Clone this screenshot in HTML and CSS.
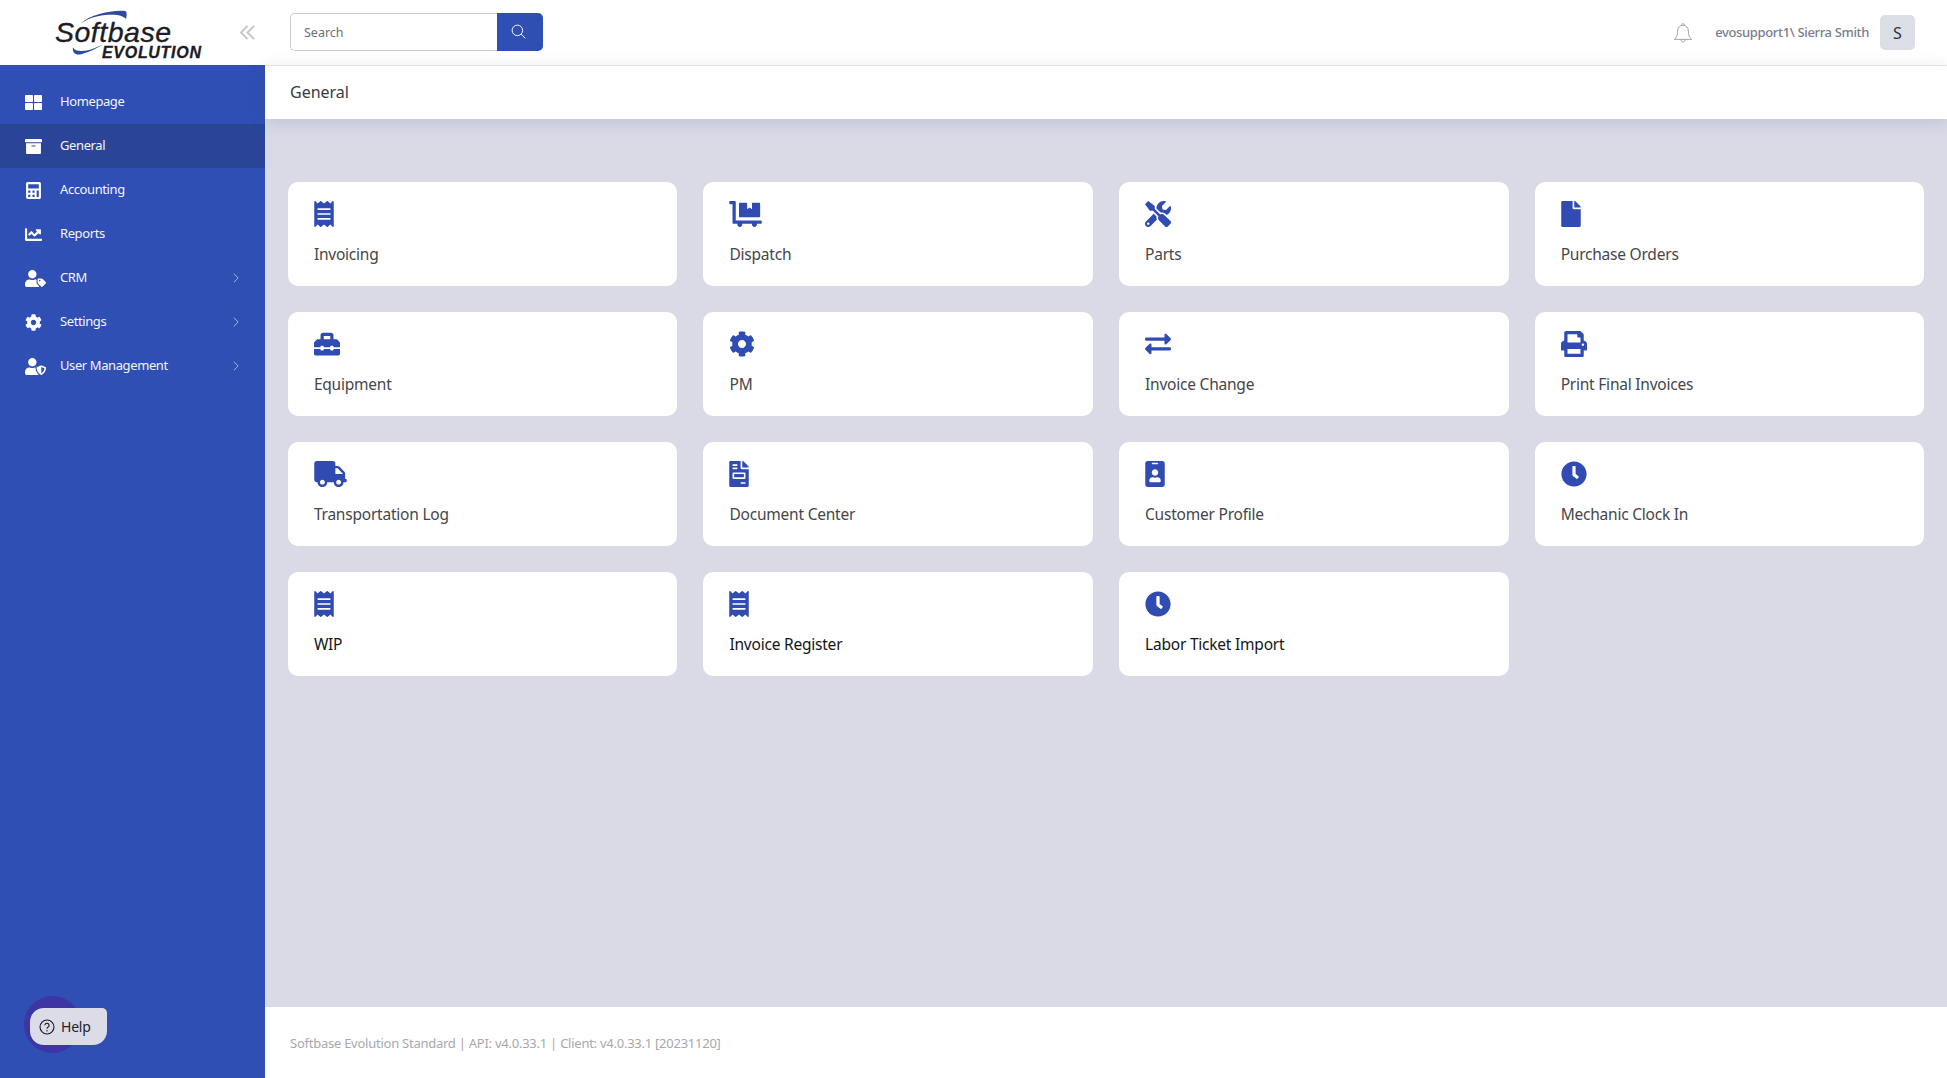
FILE: index.html
```html
<!DOCTYPE html>
<html lang="en">
<head>
<meta charset="utf-8">
<title>General</title>
<link rel="stylesheet" href="styles.css">
</head>
<body>
<svg class="defs" aria-hidden="true">
  <symbol id="i-receipt" viewBox="0 0 384 512"><path d="M358.4 3.2L320 48 265.6 3.2a15.9 15.9 0 0 0-19.2 0L192 48 137.6 3.2a15.9 15.9 0 0 0-19.2 0L64 48 25.6 3.2C15-4.7 0 2.8 0 16v480c0 13.2 15 20.7 25.6 12.8L64 464l54.4 44.8a15.9 15.9 0 0 0 19.2 0L192 464l54.4 44.8a15.9 15.9 0 0 0 19.2 0L320 464l38.4 44.8c10.5 7.9 25.6.4 25.6-12.8V16c0-13.2-15-20.7-25.6-12.8zM320 360c0 4.4-3.6 8-8 8H72c-4.4 0-8-3.6-8-8v-16c0-4.4 3.6-8 8-8h240c4.4 0 8 3.6 8 8v16zm0-96c0 4.4-3.6 8-8 8H72c-4.4 0-8-3.6-8-8v-16c0-4.4 3.6-8 8-8h240c4.4 0 8 3.6 8 8v16zm0-96c0 4.4-3.6 8-8 8H72c-4.4 0-8-3.6-8-8v-16c0-4.4 3.6-8 8-8h240c4.4 0 8 3.6 8 8v16z"/></symbol>
  <symbol id="i-dolly" viewBox="0 0 640 512"><path d="M208 320h384c8.8 0 16-7.2 16-16V48c0-8.8-7.2-16-16-16H448v128l-48-32-48 32V32H208c-8.8 0-16 7.2-16 16v256c0 8.8 7.2 16 16 16zm416 64H128V16c0-8.8-7.2-16-16-16H16C7.2 0 0 7.2 0 16v32c0 8.8 7.2 16 16 16h48v368c0 8.8 7.2 16 16 16h82.9c-1.8 5-2.9 10.4-2.9 16 0 26.5 21.5 48 48 48s48-21.5 48-48c0-5.6-1.2-11-2.9-16H451c-1.8 5-2.9 10.4-2.9 16 0 26.5 21.5 48 48 48s48-21.5 48-48c0-5.6-1.2-11-2.9-16H624c8.8 0 16-7.2 16-16v-32c0-8.8-7.2-16-16-16z"/></symbol>
  <symbol id="i-tools" viewBox="0 0 512 512"><path d="M501.1 395.7L384 278.6c-23.1-23.1-57.6-27.6-85.4-13.9L192 158.1V96L64 0 0 64l96 128h62.1l106.6 106.6c-13.6 27.8-9.2 62.3 13.9 85.4l117.1 117.1c14.6 14.6 38.2 14.6 52.7 0l52.7-52.7c14.5-14.6 14.5-38.2 0-52.7zM331.7 225c28.3 0 54.9 11 74.9 31l19.4 19.4c15.8-6.9 30.8-16.5 43.8-29.5 37.1-37.1 49.7-89.3 37.9-136.7-2.2-9-13.5-12.1-20.1-5.5l-74.4 74.4-67.9-11.3L334 98.9l74.4-74.4c6.6-6.6 3.4-17.9-5.7-20.2-47.4-11.7-99.6.9-136.6 37.9-28.5 28.5-41.9 66.1-41.2 103.6l82.1 82.1c8.1-1.9 16.5-2.9 24.7-2.9zm-103.9 82l-56.7-56.7L18.7 402.8c-25 25-25 65.5 0 90.5s65.5 25 90.5 0l123.6-123.6c-7.6-19.9-9.9-41.6-5-62.7zM64 472c-13.2 0-24-10.8-24-24 0-13.3 10.7-24 24-24s24 10.7 24 24c0 13.2-10.7 24-24 24z"/></symbol>
  <symbol id="i-file" viewBox="0 0 384 512"><path d="M224 136V0H24C10.7 0 0 10.7 0 24v464c0 13.3 10.7 24 24 24h336c13.3 0 24-10.7 24-24V160H248c-13.2 0-24-10.8-24-24zm160-14.1v6.1H256V0h6.1c6.4 0 12.5 2.5 17 7l97.9 98c4.5 4.5 7 10.6 7 16.9z"/></symbol>
  <symbol id="i-toolbox" viewBox="0 0 512 512"><path d="M502.63 214.63l-45.25-45.25c-6-6-14.14-9.37-22.63-9.37H384V80c0-26.51-21.49-48-48-48H176c-26.51 0-48 21.49-48 48v80H77.25c-8.49 0-16.62 3.37-22.63 9.37L9.37 214.63c-6 6-9.37 14.14-9.37 22.63V320h128v-16c0-8.84 7.16-16 16-16h32c8.84 0 16 7.16 16 16v16h128v-16c0-8.84 7.16-16 16-16h32c8.84 0 16 7.16 16 16v16h128v-82.75c0-8.48-3.37-16.62-9.37-22.62zM320 160H192V96h128v64zm64 208c0 8.84-7.16 16-16 16h-32c-8.84 0-16-7.16-16-16v-16H192v16c0 8.84-7.16 16-16 16h-32c-8.84 0-16-7.16-16-16v-16H0v96c0 17.67 14.33 32 32 32h448c17.67 0 32-14.33 32-32v-96H384v16z"/></symbol>
  <symbol id="i-cog" viewBox="0 0 512 512"><path d="M487.4 315.7l-42.6-24.6c4.3-23.2 4.3-47 0-70.2l42.6-24.6c4.9-2.8 7.1-8.6 5.5-14-11.1-35.6-30-67.8-54.7-94.6-3.8-4.1-10-5.1-14.8-2.3L380.8 110c-17.9-15.4-38.5-27.3-60.8-35.1V25.8c0-5.6-3.9-10.5-9.4-11.7-36.7-8.2-74.3-7.8-109.2 0-5.5 1.2-9.4 6.1-9.4 11.7V75c-22.2 7.9-42.8 19.8-60.8 35.1L88.7 85.5c-4.9-2.8-11-1.9-14.8 2.3-24.7 26.7-43.6 58.9-54.7 94.6-1.7 5.4.6 11.2 5.5 14L67.3 221c-4.3 23.2-4.3 47 0 70.2l-42.6 24.6c-4.9 2.8-7.1 8.6-5.5 14 11.1 35.6 30 67.8 54.7 94.6 3.8 4.1 10 5.1 14.8 2.3l42.6-24.6c17.9 15.4 38.5 27.3 60.8 35.1v49.2c0 5.6 3.9 10.5 9.4 11.7 36.7 8.2 74.3 7.8 109.2 0 5.5-1.2 9.4-6.1 9.4-11.7v-49.2c22.2-7.9 42.8-19.8 60.8-35.1l42.6 24.6c4.9 2.8 11 1.9 14.8-2.3 24.7-26.7 43.6-58.9 54.7-94.6 1.5-5.5-.7-11.3-5.6-14.1zM256 336c-44.1 0-80-35.9-80-80s35.9-80 80-80 80 35.9 80 80-35.9 80-80 80z"/></symbol>
  <symbol id="i-exchange" viewBox="0 0 512 512"><path d="M0 168v-16c0-13.255 10.745-24 24-24h360V80c0-21.367 25.899-32.042 40.971-16.971l80 80c9.372 9.373 9.372 24.569 0 33.941l-80 80C409.956 271.982 384 261.456 384 240v-48H24c-13.255 0-24-10.745-24-24zm488 152H128v-48c0-21.314-25.862-32.08-40.971-16.971l-80 80c-9.372 9.373-9.372 24.569 0 33.941l80 80C102.057 463.997 128 453.437 128 432v-48h360c13.255 0 24-10.745 24-24v-16c0-13.255-10.745-24-24-24z"/></symbol>
  <symbol id="i-print" viewBox="0 0 512 512"><path d="M448 192V77.25c0-8.49-3.37-16.62-9.37-22.63L393.37 9.37c-6-6-14.14-9.37-22.63-9.37H96C78.33 0 64 14.33 64 32v160c-35.35 0-64 28.65-64 64v112c0 8.84 7.16 16 16 16h48v96c0 17.67 14.33 32 32 32h320c17.67 0 32-14.33 32-32v-96h48c8.84 0 16-7.16 16-16V256c0-35.35-28.65-64-64-64zm-64 256H128v-96h256v96zm0-224H128V64h192v48c0 8.84 7.16 16 16 16h48v96zm48 72c-13.25 0-24-10.75-24-24 0-13.26 10.75-24 24-24s24 10.74 24 24c0 13.25-10.75 24-24 24z"/></symbol>
  <symbol id="i-truck" viewBox="0 0 640 512"><path d="M624 352h-16V243.9c0-12.7-5.1-24.9-14.1-33.9L494 110.1c-9-9-21.2-14.1-33.9-14.1H416V48c0-26.5-21.5-48-48-48H48C21.5 0 0 21.5 0 48v320c0 26.5 21.5 48 48 48h16c0 53 43 96 96 96s96-43 96-96h128c0 53 43 96 96 96s96-43 96-96h48c8.8 0 16-7.2 16-16v-32c0-8.8-7.2-16-16-16zM160 464c-26.5 0-48-21.5-48-48s21.5-48 48-48 48 21.5 48 48-21.5 48-48 48zm320 0c-26.5 0-48-21.5-48-48s21.5-48 48-48 48 21.5 48 48-21.5 48-48 48zm80-208H416V144h44.1l99.9 99.9V256z"/></symbol>
  <symbol id="i-invoice" viewBox="0 0 384 512"><path d="M288 256H96v64h192v-64zm89-151L279.1 7c-4.5-4.5-10.6-7-17-7H256v128h128v-6.1c0-6.3-2.5-12.4-7-16.9zm-153 31V0H24C10.7 0 0 10.7 0 24v464c0 13.3 10.7 24 24 24h336c13.3 0 24-10.7 24-24V160H248c-13.2 0-24-10.8-24-24zM64 72c0-4.42 3.58-8 8-8h80c4.42 0 8 3.58 8 8v16c0 4.42-3.58 8-8 8H72c-4.42 0-8-3.58-8-8V72zm0 64c0-4.42 3.58-8 8-8h80c4.42 0 8 3.58 8 8v16c0 4.42-3.58 8-8 8H72c-4.42 0-8-3.58-8-8v-16zm256 304c0 4.42-3.58 8-8 8h-80c-4.42 0-8-3.58-8-8v-16c0-4.42 3.58-8 8-8h80c4.42 0 8 3.58 8 8v16zm0-200v96c0 8.84-7.16 16-16 16H80c-8.84 0-16-7.16-16-16v-96c0-8.84 7.16-16 16-16h224c8.84 0 16 7.16 16 16z"/></symbol>
  <symbol id="i-badge" viewBox="0 0 384 512"><path d="M336 0H48C21.5 0 0 21.5 0 48v416c0 26.5 21.5 48 48 48h288c26.5 0 48-21.5 48-48V48c0-26.5-21.5-48-48-48zM144 32h96c8.8 0 16 7.2 16 16s-7.2 16-16 16h-96c-8.8 0-16-7.2-16-16s7.2-16 16-16zm48 128c35.3 0 64 28.7 64 64s-28.7 64-64 64-64-28.7-64-64 28.7-64 64-64zm112 236.8c0 10.6-10 19.2-22.4 19.2H102.4C90 416 80 407.4 80 396.8v-19.2c0-31.8 30.1-57.6 67.2-57.6h5c12.3 5.1 25.7 8 39.8 8s27.6-2.9 39.8-8h5c37.1 0 67.2 25.8 67.2 57.6v19.2z"/></symbol>
  <symbol id="i-clock" viewBox="0 0 512 512"><path d="M256,8C119,8,8,119,8,256S119,504,256,504,504,393,504,256,393,8,256,8Zm92.49,313h0l-20,25a16,16,0,0,1-22.49,2.5h0l-67-49.72a40,40,0,0,1-15-31.23V112a16,16,0,0,1,16-16h32a16,16,0,0,1,16,16V256l58,42.5A16,16,0,0,1,348.49,321Z"/></symbol>
  <symbol id="i-grid" viewBox="0 0 512 512"><path d="M296 32h192c13.255 0 24 10.745 24 24v160c0 13.255-10.745 24-24 24H296c-13.255 0-24-10.745-24-24V56c0-13.255 10.745-24 24-24zm-80 0H24C10.745 32 0 42.745 0 56v160c0 13.255 10.745 24 24 24h192c13.255 0 24-10.745 24-24V56c0-13.255-10.745-24-24-24zM0 296v160c0 13.255 10.745 24 24 24h192c13.255 0 24-10.745 24-24V296c0-13.255-10.745-24-24-24H24c-13.255 0-24 10.745-24 24zm296 184h192c13.255 0 24-10.745 24-24V296c0-13.255-10.745-24-24-24H296c-13.255 0-24 10.745-24 24v160c0 13.255 10.745 24 24 24z"/></symbol>
  <symbol id="i-archive" viewBox="0 0 512 512"><path d="M32 448c0 17.7 14.3 32 32 32h384c17.7 0 32-14.3 32-32V160H32v288zm160-212c0-6.6 5.4-12 12-12h104c6.6 0 12 5.4 12 12v8c0 6.6-5.4 12-12 12H204c-6.6 0-12-5.4-12-12v-8zM480 32H32C14.3 32 0 46.3 0 64v48c0 8.8 7.2 16 16 16h480c8.8 0 16-7.2 16-16V64c0-17.7-14.3-32-32-32z"/></symbol>
  <symbol id="i-calc" viewBox="0 0 448 512"><path fill-rule="evenodd" d="M48 0h352c26 0 48 22 48 48v416c0 26-22 48-48 48H48c-26 0-48-22-48-48V48C0 22 22 0 48 0zm16 64v128h320V64H64zm0 192v64h64v-64H64zm128 0v64h64v-64h-64zm128 0v192h64V256h-64zM64 384v64h64v-64H64zm128 0v64h64v-64h-64z"/></symbol>
  <symbol id="i-chart" viewBox="0 0 512 512"><path d="M496 384H64V80c0-8.84-7.16-16-16-16H16C7.16 64 0 71.16 0 80v336c0 17.67 14.33 32 32 32h464c8.84 0 16-7.16 16-16v-32c0-8.84-7.16-16-16-16zM464 96H345.94c-21.38 0-32.09 25.85-16.97 40.97l32.4 32.4L288 242.75l-73.37-73.37c-12.5-12.5-32.76-12.5-45.25 0l-68.69 68.69c-6.25 6.25-6.25 16.38 0 22.63l22.62 22.62c6.25 6.25 16.38 6.25 22.63 0L192 237.25l73.37 73.37c12.5 12.5 32.76 12.5 45.25 0l96-96 32.4 32.4c15.12 15.12 40.97 4.41 40.97-16.97V112c0-8.84-7.16-16-16-16z"/></symbol>
  <symbol id="i-usertag" viewBox="0 0 640 512"><path d="M630.6 364.9l-90.3-90.2c-12-12-28.3-18.7-45.3-18.7h-79.3c-17.7 0-32 14.3-32 32v79.2c0 17 6.7 33.2 18.7 45.2l90.3 90.2c12.5 12.5 32.8 12.5 45.3 0l92.5-92.5c12.6-12.5 12.6-32.7.1-45.2zm-182.8-21c-13.3 0-24-10.7-24-24s10.7-24 24-24 24 10.7 24 24c0 13.2-10.7 24-24 24zm-223.8-88c70.7 0 128-57.3 128-128C352 57.3 294.7 0 224 0S96 57.3 96 128c0 70.6 57.3 127.9 128 127.9zm127.8 111.2V294c-12.2-3.6-24.9-6.2-38.2-6.2h-16.7c-22.2 10.2-46.9 16-72.9 16s-50.6-5.8-72.9-16h-16.7C60.2 288 0 348.2 0 422.4V464c0 26.5 21.5 48 48 48h352c15.5 0 29.1-7.5 37.9-18.9l-58-58c-18.1-18.1-28.1-42.2-28.1-67.9z"/></symbol>
  <symbol id="i-usershield" viewBox="0 0 640 512"><path d="M622.3 271.1l-115.2-45c-4.1-1.6-12.6-3.7-22.2 0l-115.2 45c-10.7 4.2-17.7 14-17.7 24.9 0 111.6 68.7 188.8 132.9 213.9 9.6 3.7 18 1.6 22.2 0C558.4 489.9 640 420.5 640 296c0-10.9-7-20.7-17.7-24.9zM496 462.4V273.3l95.5 37.3c-5.6 87.1-60.9 135.4-95.5 151.8zM224 256c70.7 0 128-57.3 128-128S294.7 0 224 0 96 57.3 96 128s57.3 128 128 128zm96 40c0-2.5.8-4.8 1.1-7.2-2.5-.1-4.9-.8-7.5-.8h-16.7c-22.2 10.2-46.9 16-72.9 16s-50.6-5.8-72.9-16h-16.7C60.2 288 0 348.2 0 422.4V464c0 26.5 21.5 48 48 48h352c6.8 0 13.3-1.5 19.2-4-54-42.9-99.2-116.7-99.2-212z"/></symbol>
  <symbol id="i-chev" viewBox="0 0 8 14"><path d="M1 1l6 6-6 6" fill="none" stroke="currentColor" stroke-width="1.2"/></symbol>
</svg>

<div class="app">
  <aside class="sidebar">
    <div class="brand">
      <svg class="logo" viewBox="0 0 150 54">
        <path class="swoosh" d="M25 19C35 10 55 5 70 6C72 6 72 10 71 14C68 10 60 9 50 10C40 11 32 14 25 19Z"/>
        <path class="swoosh" d="M18 42C17 48 21 51 27 49C34 47 41 44 47 40C40 43 33 46 27 46C22 46 19 45 18 42Z"/>
        <text class="logo-main" x="0" y="37">Softbase</text>
        <text class="logo-sub" x="47" y="53">EVOLUTION</text>
      </svg>
      <svg class="collapse" viewBox="0 0 18 16" width="17" height="15"><path d="M9 1L2 8l7 7M16 1L9 8l7 7" fill="none" stroke="#c3c5cf" stroke-width="2"/></svg>
    </div>
    <nav class="nav">
      <a class="nav-item"><span class="nav-ico"><svg class="ico-s"><use href="#i-grid"/></svg></span><span class="nav-label">Homepage</span></a>
      <a class="nav-item active"><span class="nav-ico"><svg class="ico-s"><use href="#i-archive"/></svg></span><span class="nav-label">General</span></a>
      <a class="nav-item"><span class="nav-ico"><svg class="ico-s"><use href="#i-calc"/></svg></span><span class="nav-label">Accounting</span></a>
      <a class="nav-item"><span class="nav-ico"><svg class="ico-s"><use href="#i-chart"/></svg></span><span class="nav-label">Reports</span></a>
      <a class="nav-item"><span class="nav-ico"><svg class="ico-w"><use href="#i-usertag"/></svg></span><span class="nav-label">CRM</span><svg class="chev"><use href="#i-chev"/></svg></a>
      <a class="nav-item"><span class="nav-ico"><svg class="ico-s"><use href="#i-cog"/></svg></span><span class="nav-label">Settings</span><svg class="chev"><use href="#i-chev"/></svg></a>
      <a class="nav-item"><span class="nav-ico"><svg class="ico-w"><use href="#i-usershield"/></svg></span><span class="nav-label">User Management</span><svg class="chev"><use href="#i-chev"/></svg></a>
    </nav>
    <div class="help-halo"></div>
    <button class="help"><svg viewBox="0 0 16 16" width="16" height="16"><circle cx="8" cy="8" r="7" fill="none" stroke="#16161e" stroke-width="1.1"/><path d="M5.9 6.3a2.1 2.1 0 1 1 3.2 1.8c-.7.4-1.1.8-1.1 1.6" fill="none" stroke="#16161e" stroke-width="1.1"/><circle cx="8" cy="11.7" r=".7" fill="#16161e"/></svg><span>Help</span></button>
  </aside>

  <div class="main">
    <header class="topbar">
      <div class="search">
        <input class="search-input" type="text" placeholder="Search">
        <button class="search-btn"><svg viewBox="0 0 16 16" width="15" height="15"><circle cx="6.8" cy="6.8" r="5.6" fill="none" stroke="#fff" stroke-width="1"/><path d="M10.8 10.8l4.4 4.4" stroke="#fff" stroke-width="1"/></svg></button>
      </div>
      <div class="user">
        <svg class="bell" viewBox="0 0 20 22" width="20" height="22"><path d="M10 3.2c-3.4 0-5.4 2.7-5.4 5.8 0 4.4-.9 6.5-3.3 8.4h17.4c-2.4-1.9-3.3-4-3.3-8.4 0-3.1-2-5.800-5.400-5.800zM8.500 3.400c0-2.300 3-2.300 3 0M8 17.600c.2 3 3.800 3 4 0" fill="none" stroke="#8d8f96" stroke-width=".8"/></svg>
        <span class="user-name">evosupport1\ Sierra Smith</span>
        <span class="avatar">S</span>
      </div>
    </header>
    <div class="subheader">General</div>
    <main class="content">
      <div class="grid">
        <a class="card"><svg class="ico-c w384"><use href="#i-receipt"/></svg><span class="card-label">Invoicing</span></a>
        <a class="card"><svg class="ico-c w640"><use href="#i-dolly"/></svg><span class="card-label">Dispatch</span></a>
        <a class="card"><svg class="ico-c w512"><use href="#i-tools"/></svg><span class="card-label">Parts</span></a>
        <a class="card"><svg class="ico-c w384"><use href="#i-file"/></svg><span class="card-label">Purchase Orders</span></a>
        <a class="card"><svg class="ico-c w512"><use href="#i-toolbox"/></svg><span class="card-label">Equipment</span></a>
        <a class="card"><svg class="ico-c w512"><use href="#i-cog"/></svg><span class="card-label">PM</span></a>
        <a class="card"><svg class="ico-c w512"><use href="#i-exchange"/></svg><span class="card-label">Invoice Change</span></a>
        <a class="card"><svg class="ico-c w512"><use href="#i-print"/></svg><span class="card-label">Print Final Invoices</span></a>
        <a class="card"><svg class="ico-c w640"><use href="#i-truck"/></svg><span class="card-label">Transportation Log</span></a>
        <a class="card"><svg class="ico-c w384"><use href="#i-invoice"/></svg><span class="card-label">Document Center</span></a>
        <a class="card"><svg class="ico-c w384"><use href="#i-badge"/></svg><span class="card-label">Customer Profile</span></a>
        <a class="card"><svg class="ico-c w512"><use href="#i-clock"/></svg><span class="card-label">Mechanic Clock In</span></a>
        <a class="card dark"><svg class="ico-c w384"><use href="#i-receipt"/></svg><span class="card-label">WIP</span></a>
        <a class="card dark"><svg class="ico-c w384"><use href="#i-receipt"/></svg><span class="card-label">Invoice Register</span></a>
        <a class="card dark"><svg class="ico-c w512"><use href="#i-clock"/></svg><span class="card-label">Labor Ticket Import</span></a>
      </div>
    </main>
    <footer class="footer">Softbase Evolution Standard | API: v4.0.33.1 | Client: v4.0.33.1 [20231120]</footer>
  </div>
</div>
</body>
</html>
```
FILE: styles.css
```css
* { box-sizing: border-box; }
html, body { margin: 0; height: 100%; overflow: hidden; }
body { font-family: "Noto Sans", "Open Sans", sans-serif; color: #333; background: #d9dae6; }
.defs { display: none; }
.app { display: flex; height: 1078px; }

.sidebar { position: relative; width: 265px; flex: none; background: #304fb4; color: #fff; }
.brand { height: 65px; background: #fff; display: flex; align-items: flex-start; padding: 5px 0 0 55px; }
.logo { flex: none; overflow: visible; width: 150px; height: 54px; }
.swoosh { fill: #2c4a9e; }
.logo-main { font: italic 400 28.5px "Liberation Sans", sans-serif; letter-spacing: .5px; fill: #1c1c26; stroke: #1c1c26; stroke-width: .35px; }
.logo-sub { font: italic 700 16px "Liberation Sans", sans-serif; letter-spacing: .7px; fill: #1c1c26; stroke: #1c1c26; stroke-width: .3px; }
.collapse { flex: none; margin: 20px 0 0 34px; }

.nav { padding-top: 15px; display: flex; flex-direction: column; }
.nav-item { height: 44px; display: flex; align-items: center; padding: 0 25px; font-size: 13px; letter-spacing: -.4px; color: #f2f4fb; }
.nav-item.active { background: #2a4597; }
.nav-ico { width: 35px; flex: none; display: flex; align-items: center; }
.nav-label { flex: 1; padding-bottom: 2px; }
.ico-s { width: 17px; height: 17px; fill: #fff; }
.ico-w { width: 21px; height: 17px; fill: #fff; }
.chev { width: 6px; height: 10px; color: #b9c4e6; margin-right: 1px; }

.help-halo { position: absolute; left: 24px; top: 996px; width: 57px; height: 57px; border-radius: 50%; background: #3e35a5; }
.help { position: absolute; left: 30px; top: 1008px; width: 77px; height: 37px; border: 0; padding: 0 0 0 9px; background: #dcdce8; border-radius: 14px 5px 14px 14px; display: flex; align-items: center; gap: 6px; font: 14px "Noto Sans", sans-serif; letter-spacing: -.2px; color: #22222a; }

.main { flex: 1; min-width: 0; display: flex; flex-direction: column; }
.topbar { height: 66px; flex: none; background: #fff; border-bottom: 1px solid #e9eaf0; display: flex; align-items: flex-start; justify-content: space-between; padding: 13px 32px 0 25px; }
.search { display: flex; height: 38px; }
.search-input { width: 207px; height: 38px; border: 1px solid #c9ccd3; border-right: 0; border-radius: 5px 0 0 5px; padding: 0 13px; font: 12.5px "Noto Sans", sans-serif; outline: 0; }
.search-input::placeholder { color: #6d6f78; opacity: 1; }
.search-btn { width: 46px; height: 38px; border: 0; padding: 0 3px 2px 0; background: #304fb4; border-radius: 0 5px 5px 0; display: flex; align-items: center; justify-content: center; }
.user { display: flex; align-items: center; height: 35px; margin-top: 2px; }
.bell { margin-right: 22px; }
.user-name { font-size: 13px; font-weight: 500; letter-spacing: -.35px; color: #7b7b91; margin-right: 11px; padding-bottom: 1px; }
.avatar { width: 35px; height: 35px; border-radius: 5px; background: #dbdfe5; display: flex; align-items: center; justify-content: center; font-size: 16px; color: #2c3040; }

.subheader { position: relative; height: 53px; flex: none; background: #fff; padding: 0 25px; display: flex; align-items: center; font-size: 16px; color: #3a3a42; box-shadow: 0 3px 16px rgba(60, 62, 110, .16); padding-bottom: 1px; }
.content { flex: 1; padding: 63px 22.8px 0 22.9px; }
.grid { display: grid; grid-template-columns: repeat(4, 1fr); gap: 26px; }
.card { height: 104px; background: #fff; border-radius: 10px; padding: 19px 26px 0; display: flex; flex-direction: column; align-items: flex-start; }
.ico-c { height: 26px; fill: #304bb2; flex: none; }
.w384 { width: 20px; }
.w512 { width: 26px; }
.w640 { width: 33px; }
.card-label { margin-top: 16px; font-size: 15.5px; letter-spacing: -.22px; color: #46464a; }
.dark .card-label { color: #15151a; }
.footer { height: 71px; flex: none; background: #fff; padding: 0 25px; display: flex; align-items: center; font-size: 13px; letter-spacing: -.25px; color: #a7a8ad; }
```
